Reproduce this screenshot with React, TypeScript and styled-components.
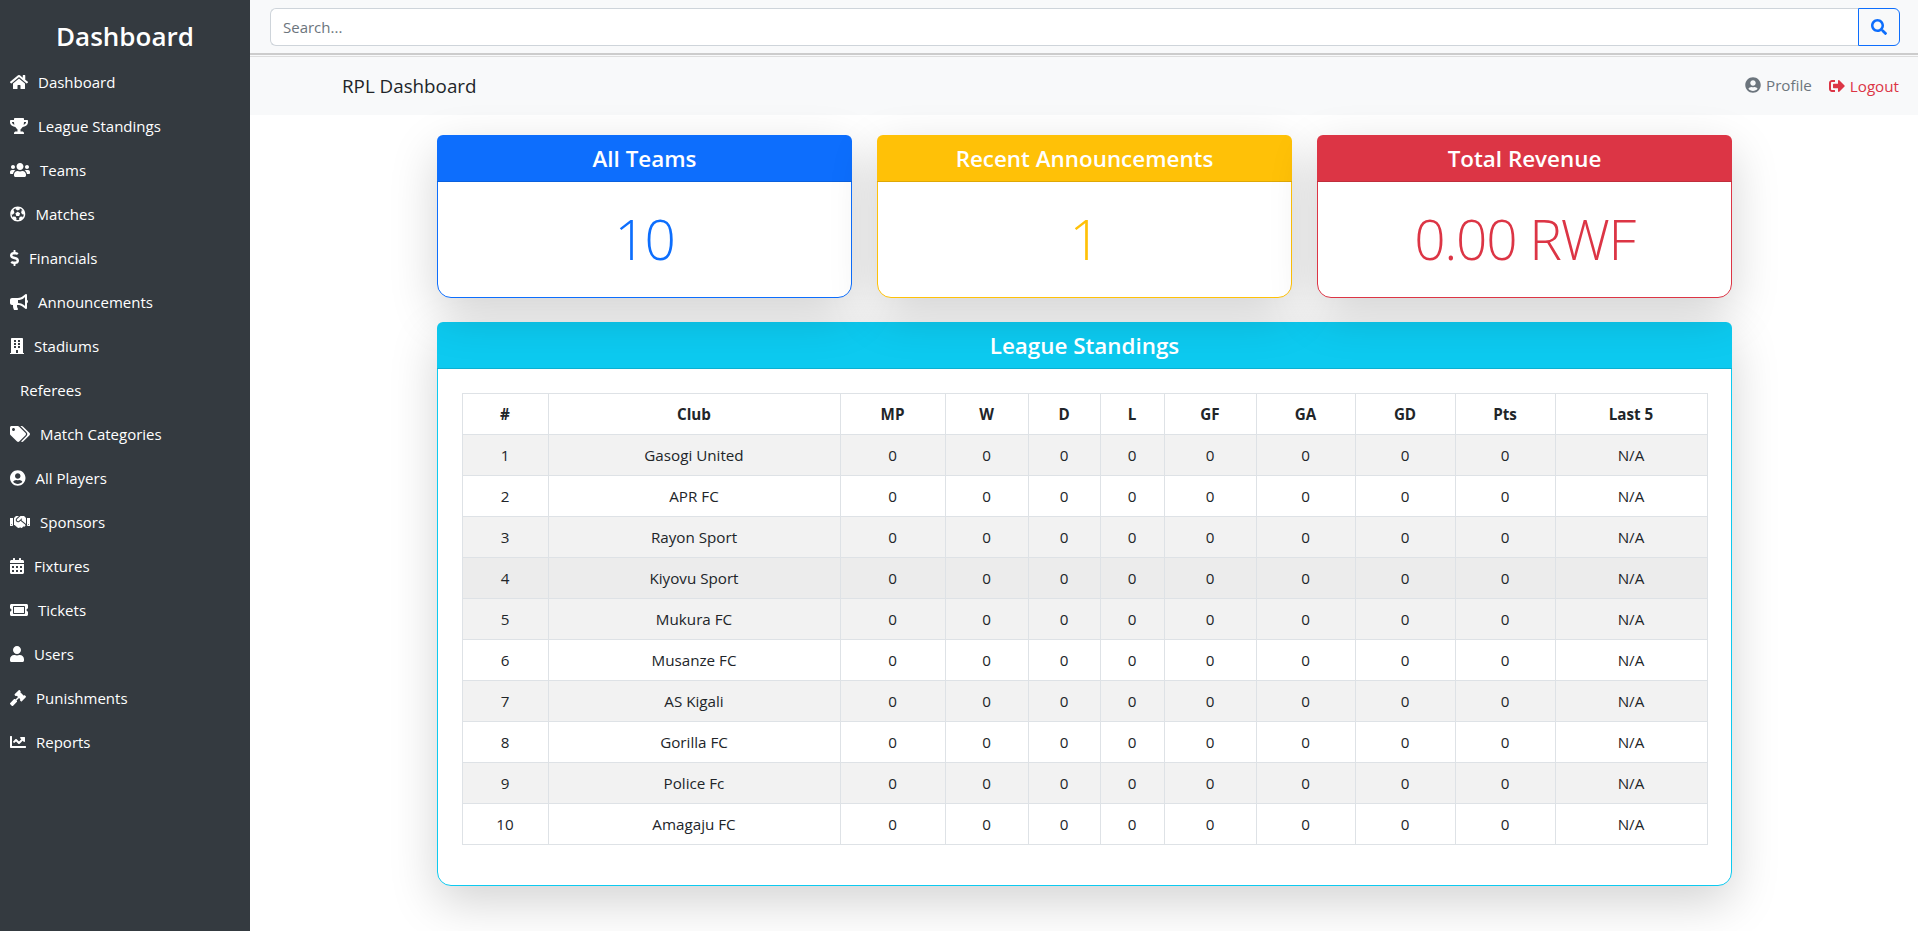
import styled, { createGlobalStyle } from 'styled-components'
import type { IconType } from 'react-icons'
import {
  FaBuilding,
  FaBullhorn,
  FaCalendarAlt,
  FaChartLine,
  FaDollarSign,
  FaFutbol,
  FaGavel,
  FaHandshake,
  FaHome,
  FaSearch,
  FaSignOutAlt,
  FaTags,
  FaTicketAlt,
  FaTrophy,
  FaUser,
  FaUserCircle,
  FaUsers,
} from 'react-icons/fa'

const FONT = '"Open Sans", "Noto Sans", "Liberation Sans", sans-serif'

const GlobalStyle = createGlobalStyle`
  * {
    box-sizing: border-box;
  }

  body {
    margin: 0;
    font-family: ${FONT};
    font-size: 15px;
    color: #212529;
    background: #fff;
  }
`

const Page = styled.div`
  display: flex;
  min-height: 100vh;
`

const Sidebar = styled.aside`
  width: 250px;
  flex: none;
  background: #343a40;
  color: #fff;
`

const Brand = styled.h2`
  margin: 0;
  padding-top: 18px;
  height: 60px;
  font-size: 26px;
  line-height: 36px;
  font-weight: 600;
  text-align: center;
`

const NavList = styled.nav`
  display: flex;
  flex-direction: column;
`

const NavItem = styled.a`
  display: flex;
  align-items: center;
  height: 44px;
  padding-left: 10px;
  color: #fff;
  font-size: 15px;
`

// react-icons sets a square box, the Font Awesome glyphs need their own width
const NavIcon = styled.span<{ $width: number }>`
  display: inline-flex;
  flex: none;
  width: ${(p) => p.$width}px;
  margin-right: 10px;

  svg {
    width: ${(p) => p.$width}px;
    height: 16px;
  }
`

const Main = styled.main`
  flex: 1;
  min-width: 0;
`

const SearchBar = styled.form`
  display: flex;
  height: 53px;
  padding: 8px 18px 7px 20px;
  background: #f8f9fa;
`

const SearchInput = styled.input`
  flex: 1;
  height: 38px;
  padding: 0 12px;
  font-family: ${FONT};
  font-size: 15px;
  color: #212529;
  background: #fff;
  border: 1px solid #ced4da;
  border-right: 0;
  border-radius: 6px 0 0 6px;

  &::placeholder {
    color: #6c757d;
  }
`

const SearchButton = styled.button`
  display: flex;
  align-items: center;
  justify-content: center;
  width: 42px;
  height: 38px;
  color: #0d6efd;
  font-size: 16px;
  background: transparent;
  border: 1px solid #0d6efd;
  border-radius: 0 6px 6px 0;
`

const Divider = styled.div`
  height: 4px;
  background: #f8f9fa;
  border-top: 2px solid #ccc;
  border-bottom: 1px solid #ddd;
`

const TitleBar = styled.header`
  display: flex;
  align-items: center;
  justify-content: space-between;
  height: 58px;
  padding: 0 19px 0 92px;
  background: #f8f9fa;
`

const PageTitle = styled.span`
  font-size: 18.8px;
`

const UserLinks = styled.div`
  display: flex;
  gap: 17px;
  font-size: 15.2px;
`

const UserLink = styled.a<{ $color: string }>`
  display: flex;
  align-items: center;
  gap: 5px;
  color: ${(p) => p.$color};

  &:first-child {
    padding-bottom: 2px;
  }

  svg {
    width: 16px;
    height: 16px;
  }
`

const Container = styled.div`
  width: 1295px;
  margin: 20px 0 0 187px;
`

const CardRow = styled.div`
  display: grid;
  grid-template-columns: repeat(3, 1fr);
  gap: 25px;
  margin-bottom: 24px;
`

const Card = styled.section<{ $color: string }>`
  background: #fff;
  border: 1px solid ${(p) => p.$color};
  border-radius: 14px;
  box-shadow: 0 16px 48px rgba(0, 0, 0, 0.175);
`

const CardHeader = styled.h4<{ $color: string }>`
  margin: -1px -1px 0;
  height: 47px;
  font-size: 22.4px;
  line-height: 48px;
  font-weight: 600;
  text-align: center;
  color: #fff;
  background: ${(p) => p.$color};
  border-bottom: 1px solid rgba(0, 0, 0, 0.125);
  border-radius: 6px 6px 0 0;
`

const StatValue = styled.div<{ $color: string }>`
  height: 115px;
  font-size: 55px;
  line-height: 114px;
  font-weight: 300;
  letter-spacing: -1.3px;
  text-align: center;
  color: ${(p) => p.$color};
`

const TableWrap = styled.div`
  padding: 24px 24px 40px;
`

const Table = styled.table`
  width: 100%;
  table-layout: fixed;
  border-collapse: collapse;
`

const Cell = styled.td`
  height: 41px;
  padding: 0 1px 0 0;
  font-size: 15.2px;
  text-align: center;
  border: 1px solid #dee2e6;
`

const HeadCell = styled(Cell).attrs({ as: 'th' })`
  font-weight: 700;
`

const Row = styled.tr<{ $bg: string }>`
  background: ${(p) => p.$bg};
`

type NavEntry = { label: string; icon?: IconType; iconWidth: number }

const navItems: NavEntry[] = [
  { label: 'Dashboard', icon: FaHome, iconWidth: 18 },
  { label: 'League Standings', icon: FaTrophy, iconWidth: 18 },
  { label: 'Teams', icon: FaUsers, iconWidth: 20 },
  { label: 'Matches', icon: FaFutbol, iconWidth: 15.5 },
  { label: 'Financials', icon: FaDollarSign, iconWidth: 9 },
  { label: 'Announcements', icon: FaBullhorn, iconWidth: 18 },
  { label: 'Stadiums', icon: FaBuilding, iconWidth: 14 },
  { label: 'Referees', iconWidth: 0 },
  { label: 'Match Categories', icon: FaTags, iconWidth: 20 },
  { label: 'All Players', icon: FaUserCircle, iconWidth: 15.5 },
  { label: 'Sponsors', icon: FaHandshake, iconWidth: 20 },
  { label: 'Fixtures', icon: FaCalendarAlt, iconWidth: 14 },
  { label: 'Tickets', icon: FaTicketAlt, iconWidth: 18 },
  { label: 'Users', icon: FaUser, iconWidth: 14 },
  { label: 'Punishments', icon: FaGavel, iconWidth: 16 },
  { label: 'Reports', icon: FaChartLine, iconWidth: 16 },
]

const stats = [
  { title: 'All Teams', value: '10', color: '#0d6efd' },
  { title: 'Recent Announcements', value: '1', color: '#ffc107' },
  { title: 'Total Revenue', value: '0.00 RWF', color: '#dc3545' },
]

const columns = [
  { label: '#', width: 86 },
  { label: 'Club', width: 292 },
  { label: 'MP', width: 105 },
  { label: 'W', width: 83 },
  { label: 'D', width: 72 },
  { label: 'L', width: 64 },
  { label: 'GF', width: 92 },
  { label: 'GA', width: 99 },
  { label: 'GD', width: 100 },
  { label: 'Pts', width: 100 },
  { label: 'Last 5', width: 152 },
]

const clubs = [
  'Gasogi United',
  'APR FC',
  'Rayon Sport',
  'Kiyovu Sport',
  'Mukura FC',
  'Musanze FC',
  'AS Kigali',
  'Gorilla FC',
  'Police Fc',
  'Amagaju FC',
]

function rowColor(index: number) {
  if (index === 3) return '#ececec' // hovered row in the screenshot
  return index % 2 === 0 ? '#f2f2f2' : '#fff'
}

export default function App() {
  return (
    <Page>
      <GlobalStyle />
      <Sidebar>
        <Brand>Dashboard</Brand>
        <NavList>
          {navItems.map(({ label, icon: Icon, iconWidth }) => (
            <NavItem key={label}>
              <NavIcon $width={iconWidth}>{Icon && <Icon />}</NavIcon>
              {label}
            </NavItem>
          ))}
        </NavList>
      </Sidebar>
      <Main>
        <SearchBar>
          <SearchInput placeholder="Search..." />
          <SearchButton type="button">
            <FaSearch />
          </SearchButton>
        </SearchBar>
        <Divider />
        <TitleBar>
          <PageTitle>RPL Dashboard</PageTitle>
          <UserLinks>
            <UserLink $color="#6c757d">
              <FaUserCircle /> Profile
            </UserLink>
            <UserLink $color="#dc3545">
              <FaSignOutAlt /> Logout
            </UserLink>
          </UserLinks>
        </TitleBar>
        <Container>
          <CardRow>
            {stats.map((s) => (
              <Card key={s.title} $color={s.color}>
                <CardHeader $color={s.color}>{s.title}</CardHeader>
                <StatValue $color={s.color}>{s.value}</StatValue>
              </Card>
            ))}
          </CardRow>
          <Card $color="#0dcaf0">
            <CardHeader $color="#0dcaf0">League Standings</CardHeader>
            <TableWrap>
              <Table>
                <colgroup>
                  {columns.map((c) => (
                    <col key={c.label} style={{ width: c.width }} />
                  ))}
                </colgroup>
                <thead>
                  <Row $bg="#fff">
                    {columns.map((c) => (
                      <HeadCell key={c.label}>{c.label}</HeadCell>
                    ))}
                  </Row>
                </thead>
                <tbody>
                  {clubs.map((club, i) => (
                    <Row key={club} $bg={rowColor(i)}>
                      <Cell>{i + 1}</Cell>
                      <Cell>{club}</Cell>
                      {Array.from({ length: 8 }, (_, n) => (
                        <Cell key={n}>0</Cell>
                      ))}
                      <Cell>N/A</Cell>
                    </Row>
                  ))}
                </tbody>
              </Table>
            </TableWrap>
          </Card>
        </Container>
      </Main>
    </Page>
  )
}
